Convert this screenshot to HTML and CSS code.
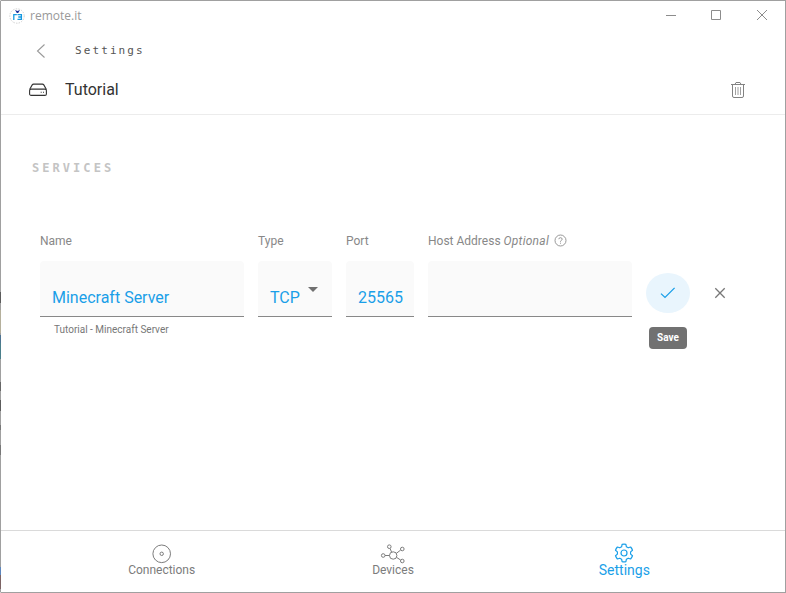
FILE: index.html
```html
<!DOCTYPE html>
<html lang="en">
<head>
<meta charset="utf-8">
<title>remote.it</title>
<link rel="stylesheet" href="styles.css">
</head>
<body>
<div class="window">
  <header class="titlebar">
    <svg class="logo" width="16" height="16" viewBox="0 0 16 16" fill="none">
      <circle cx="8" cy="8" r="7.200" stroke="#c4c4c4" stroke-width=".8" stroke-dasharray="1.500 1.200"/>
      <path d="M6 2l2.500 1L11 2 9.200 5H7.800z" fill="#1b2f9b"/>
      <path d="M4.800 12V6.700H7.800M8.500 6.700H12.400V11.400H8.500M9.300 9H12.400" stroke="#1699e0" stroke-width="1.300"/>
    </svg>
    <span class="app-name">remote.it</span>
    <svg class="controls" width="102" height="12" viewBox="0 0 102 12" fill="none" stroke="#8c8c8c">
      <path d="M0 5.500h10M45.500.5h9v9h-9zM91 0l10 10M101 0L91 10"/>
    </svg>
  </header>
  <div class="crumb">
    <svg width="10" height="16" viewBox="0 0 10 16" fill="none" stroke="#999" stroke-width="1.100"><path d="M8.500 1.500L1.500 8l7 6.500"/></svg>
    <span class="crumb-text">Settings</span>
  </div>
  <div class="device">
    <svg width="18" height="14" viewBox="0 0 18 14" fill="none" stroke="#333" stroke-width="1.100">
      <path d="M.6 6.500L3.200 1.900Q3.700 1.100 4.600 1.100H13.400Q14.300 1.100 14.800 1.900L17.400 6.500"/>
      <rect x=".6" y="6.100" width="16.800" height="6.300" rx="1.500"/>
      <path d="M11.700 9.300h1M14 9.300h1"/>
    </svg>
    <h1 class="device-name">Tutorial</h1>
    <svg class="trash" width="14" height="17" viewBox="0 0 14 17" fill="none" stroke="#828282">
      <path d="M0 3.500h14M4 3.300L5 1.500h4L10 3.300M1.500 3.500V15q0 1.500 1.500 1.500h8q1.500 0 1.500-1.500V3.500"/>
      <path d="M4.500 6v8M7 6v8M9.500 6v8" stroke="#a0a0a0"/>
    </svg>
  </div>
  <main class="content">
    <h2 class="section">SERVICES</h2>
    <div class="form">
      <label class="field name"><span class="label">Name</span><span class="input">Minecraft Server</span><span class="hint">Tutorial - Minecraft Server</span></label>
      <label class="field type"><span class="label">Type</span><span class="input">TCP<svg class="caret" width="10" height="5" viewBox="0 0 10 5"><path d="M0 0h10L5 5z" fill="#707070"/></svg></span></label>
      <label class="field port"><span class="label">Port</span><span class="input">25565</span></label>
      <label class="field host"><span class="label">Host Address <i>Optional</i><svg class="help" width="13" height="13" viewBox="0 0 13 13" fill="none" stroke="#8c8c8c" stroke-width=".9"><circle cx="6.500" cy="6.500" r="5.500"/><path d="M4.800 5.200Q4.900 3.700 6.500 3.700T8.200 5.200Q8.200 6 7.200 6.500T6.500 7.700M6.500 8.700v1"/></svg></span><span class="input"></span></label>
      <div class="save">
        <svg width="16" height="12" viewBox="0 0 16 12" fill="none" stroke="#1a9fe8" stroke-width="1.300"><path d="M1 6.600L5 10.400L14.600.9"/></svg>
        <span class="tooltip">Save</span>
      </div>
      <div class="cancel"><svg width="12" height="12" viewBox="0 0 12 12" fill="none" stroke="#777" stroke-width="1.300"><path d="M1.300 1.300l9.400 9.400M10.700 1.300l-9.400 9.400"/></svg></div>
    </div>
  </main>
  <nav class="tabs">
    <a class="tab">
      <svg width="20" height="20" viewBox="0 0 20 20" fill="none" stroke="#7c7c7c"><circle cx="9.700" cy="9.800" r="8.800"/><circle cx="9.700" cy="9.800" r="1.700"/></svg>
      <span>Connections</span>
    </a>
    <a class="tab">
      <svg width="26" height="20" viewBox="0 0 26 20" fill="none" stroke="#7c7c7c"><circle cx="13.200" cy="11.500" r="3.700"/><circle cx="3.200" cy="11.500" r="1.800"/><circle cx="9.300" cy="2.700" r="1.800"/><circle cx="22.300" cy="5" r="1.800"/><circle cx="22.300" cy="17" r="1.800"/><path d="M5 11.500h4.500M10 4.400l1.600 3.700M16.300 9.400l4.300-3.300M16.600 13.400l4 2.600"/></svg>
      <span>Devices</span>
    </a>
    <a class="tab active">
      <svg width="20" height="20" viewBox="0 0 20 20" fill="none" stroke="#1a9fe8" stroke-width="1.200" stroke-linejoin="round"><circle cx="10" cy="10" r="3"/><path d="M8.100 1.300Q10 .8 11.900 1.300L12.400 3.800L14.200 4.800L16.600 4Q17.900 5.400 18.500 7.200L16.600 8.900V11.100L18.500 12.800Q17.900 14.600 16.600 16L14.200 15.200L12.400 16.200L11.900 18.700Q10 19.200 8.100 18.700L7.600 16.200L5.800 15.200L3.400 16Q2.100 14.600 1.500 12.800L3.400 11.100V8.900L1.500 7.200Q2.100 5.400 3.400 4L5.800 4.800L7.600 3.800Z"/></svg>
      <span>Settings</span>
    </a>
  </nav>
</div>
</body>
</html>
```

FILE: styles.css
```css
* { box-sizing: border-box; }
body { margin: 0; font-family: Roboto, sans-serif; color: #333; background: #fff; }
svg { display: block; flex: none; }
.window {
  width: 786px; height: 593px; border: 1px solid #a0a0a0; border-left-color: transparent;
  display: flex; flex-direction: column; overflow: hidden;
  /* desktop showing through the window's left edge */
  background: linear-gradient(#fff, #fff) padding-box,
    linear-gradient(#a0a0a0 292px, #5c5c5c 292px 303px, #a0a0a0 303px 310px, #b5b09c 310px 333px, #a0a0a0 333px 335px, #4d7391 335px 343px, #4b7f8b 343px 359px, #a0a0a0 359px 382px, #666 382px 391px, #a0a0a0 391px 400px, #5c5c5c 400px 411px, #a0a0a0 411px 425px, #777 425px 430px, #a0a0a0 430px 445px, #777 445px 455px, #a0a0a0 455px 567px, #5d86bd 567px 575px, #7c6465 575px 589px, #a0a0a0 589px) border-box;
}
.titlebar { height: 29px; padding: 0 17px 0 8px; display: flex; align-items: center; }
.app-name { margin-left: 5px; font: 12px/16px "Open Sans", sans-serif; color: #999; }
.controls { margin-left: auto; }
.crumb { height: 41px; padding-left: 35px; display: flex; align-items: center; }
.crumb-text { margin-left: 29px; font: 11px/16px "DejaVu Sans Mono", monospace; letter-spacing: 2.100px; color: #555; }
.device { height: 44px; padding: 0 40px 6px 28px; display: flex; align-items: center; border-bottom: 1px solid #ececec; }
.device-name { margin: 0 0 0 18px; font-size: 16px; line-height: 20px; font-weight: 400; }
.trash { margin-left: auto; }
.content { flex: 1; padding: 45px 0 0 31px; }
.section { margin: 0; font: bold 12px/16px "DejaVu Sans Mono", monospace; letter-spacing: 3.050px; color: #c4c4c4; }
.form { display: flex; gap: 14px; padding: 57px 0 0 8px; }
.field { display: flex; flex-direction: column; }
.name, .host { width: 204px; }
.type { width: 74px; }
.port { width: 68px; }
.label { display: flex; align-items: center; height: 16px; font-size: 12px; color: #888; white-space: pre; }
.label i { letter-spacing: .25px; }
.help { margin: 0 0 1px 5px; }
.input { display: flex; height: 56px; margin-top: 12px; padding: 27px 12px 0; border-bottom: 1px solid #888; border-radius: 4px 4px 0 0; background: #fafafa; color: #1a9fe8; font-size: 16px; line-height: 20px; }
.caret { margin: -1px 0 0 8px; }
.hint { margin: 6px 0 0 14px; font-size: 10px; line-height: 14px; color: #777; }
.save { position: relative; width: 44px; height: 40px; margin-top: 40px; border-radius: 50%; background: #e9f5fd; display: flex; align-items: center; justify-content: center; }
.tooltip { position: absolute; top: 54px; left: 3px; width: 38px; height: 22px; border-radius: 4px; background: #717171; color: #fff; font-size: 10px; font-weight: 700; line-height: 22px; text-align: center; }
.cancel { height: 40px; margin: 40px 0 0 10px; display: flex; align-items: center; }
.tabs { height: 62px; padding: 0 45px; display: flex; border-top: 1px solid #dadada; }
.tab { flex: 1; display: flex; flex-direction: column; align-items: center; padding-top: 13px; font-size: 12px; line-height: 14px; color: #7c7c7c; }
.tab span { margin-top: -1px; }
.active { padding-top: 12px; color: #1a9fe8; font-size: 14px; }
.active span { margin-top: 0; }
```
